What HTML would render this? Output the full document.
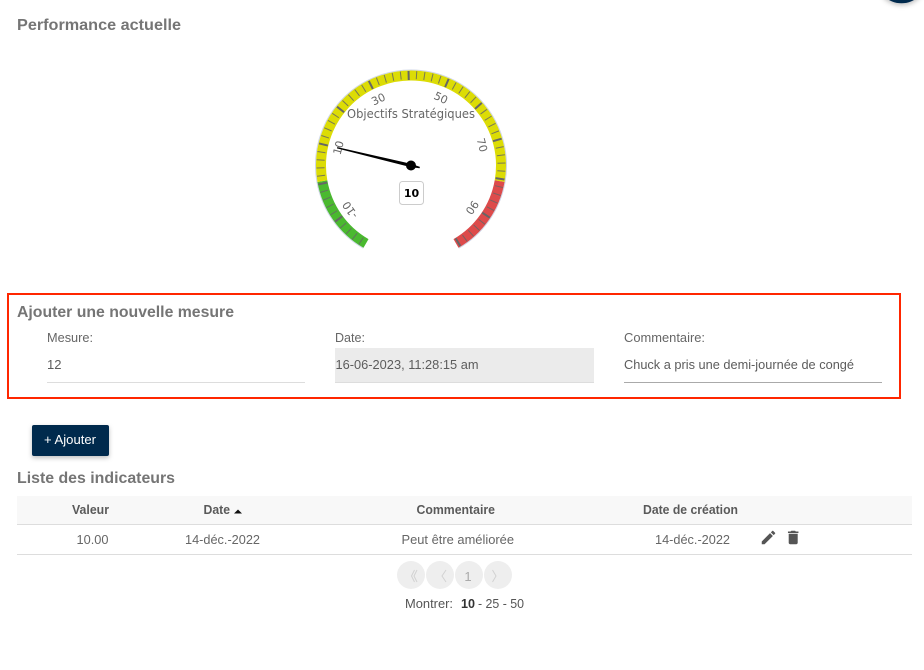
<!DOCTYPE html>
<html lang="fr">
<head>
<meta charset="utf-8">
<title>Performance actuelle</title>
<style>
html,body{margin:0;padding:0;background:#fff;width:924px;height:670px;overflow:hidden}
svg{display:block}
text{font-family:"Liberation Sans",Arial,sans-serif;white-space:pre}
.h{font-size:16px;font-weight:bold;fill:#757575}
.l{font-size:12.5px;fill:#666}
.v{font-size:13px;fill:#5c5c5c}
.th{font-size:12.5px;font-weight:bold;fill:#5a5a5a}
.td{font-size:13px;fill:#666}
.g{font-family:"DejaVu Sans",sans-serif;font-size:11px;fill:#666;text-anchor:middle}
.m line{stroke:#666;stroke-width:1;stroke-opacity:.85}
.M line{stroke:#666;stroke-width:2}
</style>
</head>
<body>
<svg width="924" height="670" viewBox="0 0 924 670" xmlns="http://www.w3.org/2000/svg">
<defs>
<filter id="s" x="-20%" y="-20%" width="140%" height="150%"><feDropShadow dx="0" dy="2" stdDeviation="2.5" flood-color="#000" flood-opacity=".25"/></filter>
</defs>
<circle cx="901.5" cy="-22" r="25.3" fill="#00294d" filter="url(#s)"/>
<text class="h" x="17" y="30" textLength="164" lengthAdjust="spacingAndGlyphs">Performance actuelle</text>

<!-- gauge -->
<path d="M363.25 248.2A95.5 95.5 0 1 1 458.75 248.2" fill="none" stroke="#cfd6e8" stroke-width="1"/>
<g fill="none" stroke-width="10">
<path d="M366 243.44A90 90 0 0 1 322.37 181.13" stroke="#4ab92f"/>
<path d="M322.37 181.13A90 90 0 1 1 499.63 181.13" stroke="#dcdc05"/>
<path d="M499.63 181.13A90 90 0 0 1 456 243.44" stroke="#dd4b4b"/>
</g>
<g class="m">
<line x1="411" y1="71" x2="411" y2="79" transform="rotate(-146.5 411 165.5)"/>
<line x1="411" y1="71" x2="411" y2="79" transform="rotate(-141.5 411 165.5)"/>
<line x1="411" y1="71" x2="411" y2="79" transform="rotate(-136.5 411 165.5)"/>
<line x1="411" y1="71" x2="411" y2="79" transform="rotate(-131.5 411 165.5)"/>
<line x1="411" y1="71" x2="411" y2="79" transform="rotate(-121.5 411 165.5)"/>
<line x1="411" y1="71" x2="411" y2="79" transform="rotate(-116.5 411 165.5)"/>
<line x1="411" y1="71" x2="411" y2="79" transform="rotate(-111.5 411 165.5)"/>
<line x1="411" y1="71" x2="411" y2="79" transform="rotate(-106.5 411 165.5)"/>
<line x1="411" y1="71" x2="411" y2="79" transform="rotate(-96.5 411 165.5)"/>
<line x1="411" y1="71" x2="411" y2="79" transform="rotate(-91.5 411 165.5)"/>
<line x1="411" y1="71" x2="411" y2="79" transform="rotate(-86.5 411 165.5)"/>
<line x1="411" y1="71" x2="411" y2="79" transform="rotate(-81.5 411 165.5)"/>
<line x1="411" y1="71" x2="411" y2="79" transform="rotate(-71.5 411 165.5)"/>
<line x1="411" y1="71" x2="411" y2="79" transform="rotate(-66.5 411 165.5)"/>
<line x1="411" y1="71" x2="411" y2="79" transform="rotate(-61.5 411 165.5)"/>
<line x1="411" y1="71" x2="411" y2="79" transform="rotate(-56.5 411 165.5)"/>
<line x1="411" y1="71" x2="411" y2="79" transform="rotate(-46.5 411 165.5)"/>
<line x1="411" y1="71" x2="411" y2="79" transform="rotate(-41.5 411 165.5)"/>
<line x1="411" y1="71" x2="411" y2="79" transform="rotate(-36.5 411 165.5)"/>
<line x1="411" y1="71" x2="411" y2="79" transform="rotate(-31.5 411 165.5)"/>
<line x1="411" y1="71" x2="411" y2="79" transform="rotate(-21.5 411 165.5)"/>
<line x1="411" y1="71" x2="411" y2="79" transform="rotate(-16.5 411 165.5)"/>
<line x1="411" y1="71" x2="411" y2="79" transform="rotate(-11.5 411 165.5)"/>
<line x1="411" y1="71" x2="411" y2="79" transform="rotate(-6.5 411 165.5)"/>
<line x1="411" y1="71" x2="411" y2="79" transform="rotate(3.5 411 165.5)"/>
<line x1="411" y1="71" x2="411" y2="79" transform="rotate(8.5 411 165.5)"/>
<line x1="411" y1="71" x2="411" y2="79" transform="rotate(13.5 411 165.5)"/>
<line x1="411" y1="71" x2="411" y2="79" transform="rotate(18.5 411 165.5)"/>
<line x1="411" y1="71" x2="411" y2="79" transform="rotate(28.5 411 165.5)"/>
<line x1="411" y1="71" x2="411" y2="79" transform="rotate(33.5 411 165.5)"/>
<line x1="411" y1="71" x2="411" y2="79" transform="rotate(38.5 411 165.5)"/>
<line x1="411" y1="71" x2="411" y2="79" transform="rotate(43.5 411 165.5)"/>
<line x1="411" y1="71" x2="411" y2="79" transform="rotate(53.5 411 165.5)"/>
<line x1="411" y1="71" x2="411" y2="79" transform="rotate(58.5 411 165.5)"/>
<line x1="411" y1="71" x2="411" y2="79" transform="rotate(63.5 411 165.5)"/>
<line x1="411" y1="71" x2="411" y2="79" transform="rotate(68.5 411 165.5)"/>
<line x1="411" y1="71" x2="411" y2="79" transform="rotate(78.5 411 165.5)"/>
<line x1="411" y1="71" x2="411" y2="79" transform="rotate(83.5 411 165.5)"/>
<line x1="411" y1="71" x2="411" y2="79" transform="rotate(88.5 411 165.5)"/>
<line x1="411" y1="71" x2="411" y2="79" transform="rotate(93.5 411 165.5)"/>
<line x1="411" y1="71" x2="411" y2="79" transform="rotate(103.5 411 165.5)"/>
<line x1="411" y1="71" x2="411" y2="79" transform="rotate(108.5 411 165.5)"/>
<line x1="411" y1="71" x2="411" y2="79" transform="rotate(113.5 411 165.5)"/>
<line x1="411" y1="71" x2="411" y2="79" transform="rotate(118.5 411 165.5)"/>
<line x1="411" y1="71" x2="411" y2="79" transform="rotate(128.5 411 165.5)"/>
<line x1="411" y1="71" x2="411" y2="79" transform="rotate(133.5 411 165.5)"/>
<line x1="411" y1="71" x2="411" y2="79" transform="rotate(138.5 411 165.5)"/>
<line x1="411" y1="71" x2="411" y2="79" transform="rotate(143.5 411 165.5)"/>
</g>
<g class="M">
<line x1="411" y1="71" x2="411" y2="80" transform="rotate(-126.5 411 165.5)"/>
<line x1="411" y1="71" x2="411" y2="80" transform="rotate(-101.5 411 165.5)"/>
<line x1="411" y1="71" x2="411" y2="80" transform="rotate(-76.5 411 165.5)"/>
<line x1="411" y1="71" x2="411" y2="80" transform="rotate(-51.5 411 165.5)"/>
<line x1="411" y1="71" x2="411" y2="80" transform="rotate(-26.5 411 165.5)"/>
<line x1="411" y1="71" x2="411" y2="80" transform="rotate(-1.5 411 165.5)"/>
<line x1="411" y1="71" x2="411" y2="80" transform="rotate(23.5 411 165.5)"/>
<line x1="411" y1="71" x2="411" y2="80" transform="rotate(48.5 411 165.5)"/>
<line x1="411" y1="71" x2="411" y2="80" transform="rotate(73.5 411 165.5)"/>
<line x1="411" y1="71" x2="411" y2="80" transform="rotate(98.5 411 165.5)"/>
<line x1="411" y1="71" x2="411" y2="80" transform="rotate(123.5 411 165.5)"/>
<line x1="411" y1="71" x2="411" y2="80" transform="rotate(148.5 411 165.5)"/>
</g>
<text class="g" y="4" transform="translate(350 210) rotate(-125)">-10</text>
<text class="g" y="4" transform="translate(338.3 147.7) rotate(-75)">10</text>
<text class="g" y="4" transform="translate(378.3 99) rotate(-25)">30</text>
<text class="g" y="4" transform="translate(441 97.7) rotate(25)">50</text>
<text class="g" y="4" transform="translate(482.3 145) rotate(75)">70</text>
<text class="g" y="4" transform="translate(472.3 207.7) rotate(125)">90</text>
<text x="411" y="118" text-anchor="middle" style="font-family:'DejaVu Sans',sans-serif;font-size:12px;fill:#666" textLength="128" lengthAdjust="spacingAndGlyphs">Objectifs Stratégiques</text>
<path d="M-.6 -76L.6 -76L1.7 0L.7 9L-.7 9L-1.7 0Z" fill="#000" transform="translate(411 165.5) rotate(-76.5)"/>
<circle cx="411" cy="165.5" r="5" fill="#000"/>
<rect x="399.5" y="181.5" width="24" height="23" rx="3" fill="#fff" stroke="#ccc"/>
<text x="411.5" y="197" text-anchor="middle" style="font-family:'DejaVu Sans',sans-serif;font-size:11px;font-weight:bold;fill:#000">10</text>

<!-- form -->
<rect x="8" y="294" width="892" height="104" fill="none" stroke="#ff2600" stroke-width="2"/>
<text class="h" x="17" y="317" textLength="217" lengthAdjust="spacingAndGlyphs">Ajouter une nouvelle mesure</text>
<text class="l" x="47" y="342" textLength="46" lengthAdjust="spacingAndGlyphs">Mesure:</text>
<text class="v" x="47" y="369" textLength="14.5" lengthAdjust="spacingAndGlyphs">12</text>
<rect x="47" y="382" width="258" height="1" fill="#ddd"/>
<text class="l" x="335" y="342" textLength="30" lengthAdjust="spacingAndGlyphs">Date:</text>
<rect x="335" y="348" width="259" height="35" fill="#ebebeb"/>
<rect x="335" y="382" width="259" height="1" fill="#ddd"/>
<text class="v" x="335.5" y="369" textLength="143" lengthAdjust="spacingAndGlyphs">16-06-2023, 11:28:15 am</text>
<text class="l" x="624" y="342" textLength="81" lengthAdjust="spacingAndGlyphs">Commentaire:</text>
<text class="v" x="624" y="369" textLength="230" lengthAdjust="spacingAndGlyphs">Chuck a pris une demi-journée de congé</text>
<rect x="624" y="382" width="258" height="1" fill="#aaa"/>

<!-- button -->
<rect x="32" y="425" width="77" height="31" rx="2" fill="#00294d" filter="url(#s)"/>
<text x="44" y="444" style="font-size:13px;fill:#fff" textLength="52" lengthAdjust="spacingAndGlyphs">+ Ajouter</text>

<!-- table -->
<text class="h" x="17" y="483" textLength="158" lengthAdjust="spacingAndGlyphs">Liste des indicateurs</text>
<rect x="17" y="496" width="895" height="28" fill="#f8f8f8"/>
<rect x="17" y="524" width="895" height="1" fill="#ddd"/>
<rect x="17" y="554" width="895" height="1" fill="#ddd"/>
<text class="th" x="72" y="514" textLength="37" lengthAdjust="spacingAndGlyphs">Valeur</text>
<text class="th" x="203.5" y="514" textLength="26.5" lengthAdjust="spacingAndGlyphs">Date</text>
<path d="M234 513.5L238 509.5L242 513.5Z" fill="#111"/>
<text class="th" x="416.5" y="514" textLength="78.5" lengthAdjust="spacingAndGlyphs">Commentaire</text>
<text class="th" x="643" y="514" textLength="95" lengthAdjust="spacingAndGlyphs">Date de création</text>
<text class="td" x="76.5" y="544" textLength="32" lengthAdjust="spacingAndGlyphs">10.00</text>
<text class="td" x="185" y="544" textLength="75" lengthAdjust="spacingAndGlyphs">14-déc.-2022</text>
<text class="td" x="401.5" y="544" textLength="112.5" lengthAdjust="spacingAndGlyphs">Peut être améliorée</text>
<text class="td" x="655" y="544" textLength="75" lengthAdjust="spacingAndGlyphs">14-déc.-2022</text>
<path transform="translate(759.5 528.5) scale(.75)" fill="#555" d="M3 17.25V21h3.75L17.81 9.94l-3.75-3.75L3 17.25zM20.71 7.04c.39-.39.39-1.02 0-1.41l-2.34-2.34c-.39-.39-1.02-.39-1.41 0l-1.83 1.83 3.75 3.75 1.83-1.83z"/>
<path transform="translate(784.2 528.5) scale(.75)" fill="#555" d="M6 19c0 1.1.9 2 2 2h8c1.1 0 2-.9 2-2V7H6v12zM19 4h-3.5l-1-1h-5l-1 1H5v2h14V4z"/>

<!-- pagination -->
<g fill="#eee">
<circle cx="411" cy="575" r="14"/>
<circle cx="440" cy="575" r="14"/>
<circle cx="469" cy="575" r="14"/>
<circle cx="498" cy="575" r="14"/>
</g>
<g fill="none" stroke="#d2d2d2" stroke-width="1">
<path d="M414.5 570L411.5 576L414.5 582M417 570L414 576L417 582"/>
<path d="M446 570L442 576L446 582"/>
<path d="M492.5 570L496 576L492.5 582"/>
</g>
<text x="468" y="581" text-anchor="middle" style="font-size:13px;fill:#aaa">1</text>
<text x="405" y="608" style="font-size:13px;fill:#555" textLength="48" lengthAdjust="spacingAndGlyphs">Montrer:</text>
<text x="461" y="608" style="font-size:13px;font-weight:bold;fill:#333" textLength="14" lengthAdjust="spacingAndGlyphs">10</text>
<text x="478" y="608" style="font-size:13px;fill:#555" textLength="46" lengthAdjust="spacingAndGlyphs">- 25 - 50</text>
</svg>
</body>
</html>
